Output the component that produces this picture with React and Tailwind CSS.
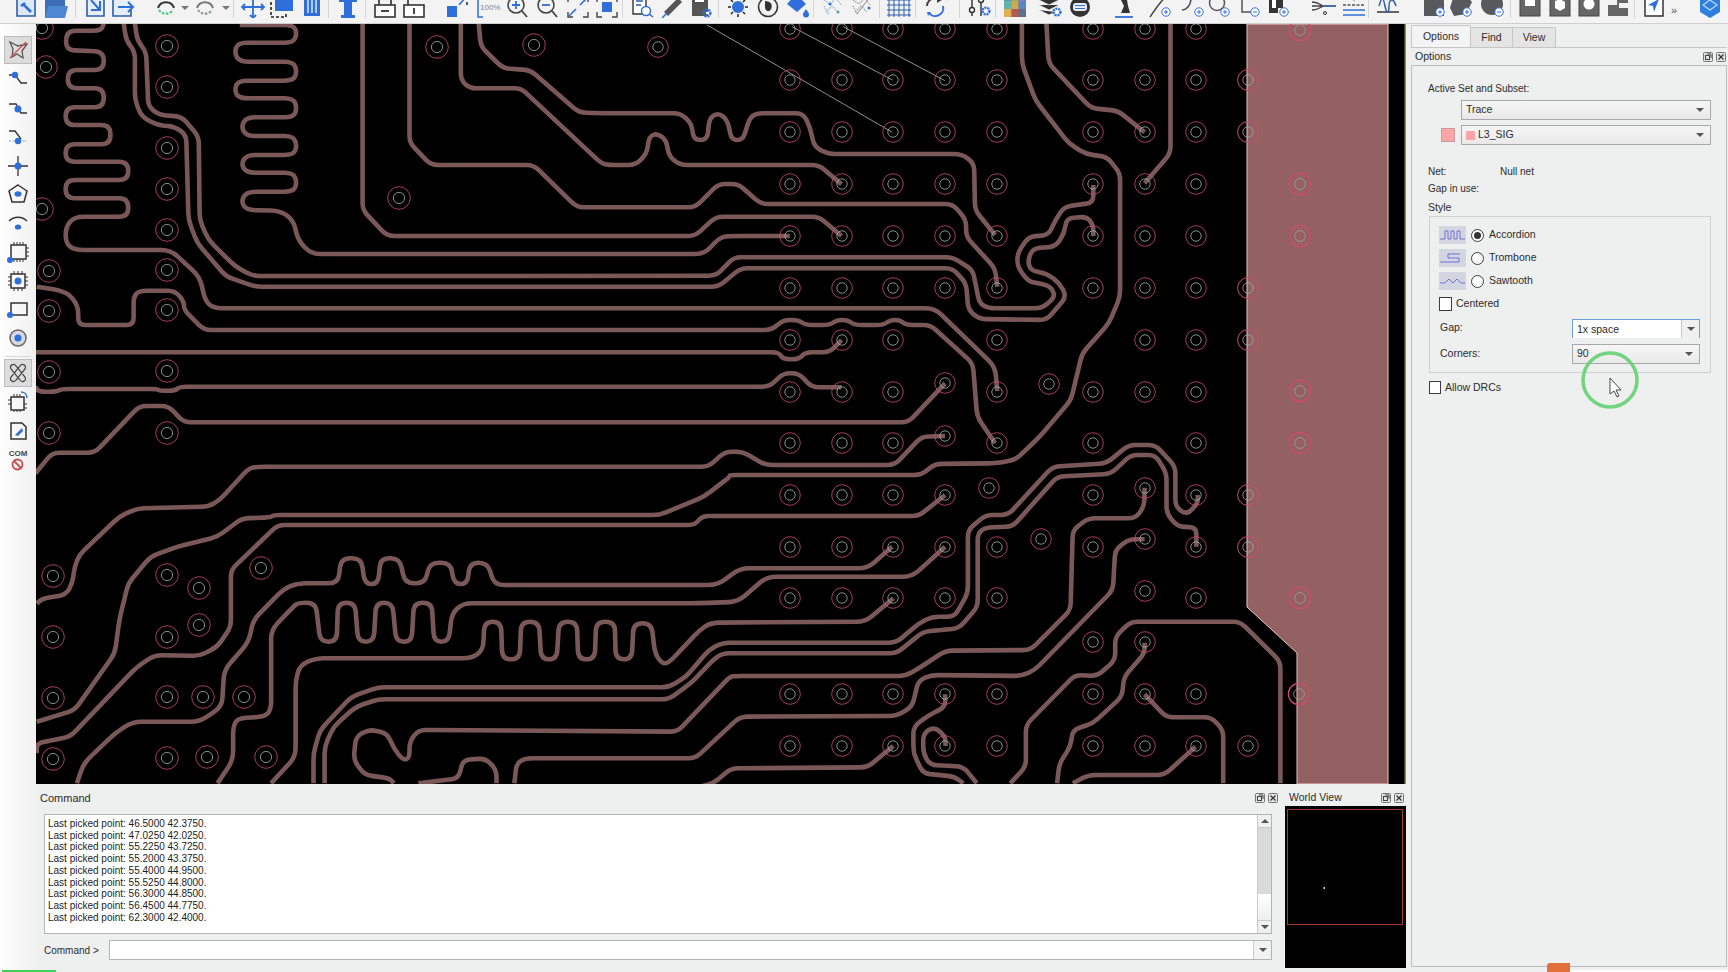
import React from "react";

const BLUE = "#2f6fdc";

// the board drawing is noted in four local grids, scaled back to page pixels
const zones = {
  8: [600, 20],
  9: [30, 20],
  10: [30, 420],
  11: [700, 420],
};

const tr = (...parts) => {
  const pts = [];
  for (let i = 0; i < parts.length; i += 2) {
    const [ox, oy] = zones[parts[i]];
    const list = parts[i + 1];
    for (let j = 0; j < list.length; j += 2) {
      pts.push([ox + list[j] / 2.24, oy + list[j + 1] / 3]);
    }
  }
  return pts;
};

const roundPath = (pts, r = 7) => {
  let d = `M${pts[0][0].toFixed(1)} ${pts[0][1].toFixed(1)}`;
  for (let i = 1; i < pts.length - 1; i++) {
    const [ax, ay] = pts[i - 1];
    const [bx, by] = pts[i];
    const [cx, cy] = pts[i + 1];
    const l1 = Math.hypot(bx - ax, by - ay) || 1;
    const l2 = Math.hypot(cx - bx, cy - by) || 1;
    const d1 = Math.min(r, l1 / 2);
    const d2 = Math.min(r, l2 / 2);
    d += `L${(bx - ((bx - ax) * d1) / l1).toFixed(1)} ${(by - ((by - ay) * d1) / l1).toFixed(1)}`;
    d += `Q${bx.toFixed(1)} ${by.toFixed(1)} ${(bx + ((cx - bx) * d2) / l2).toFixed(1)} ${(by + ((cy - by) * d2) / l2).toFixed(1)}`;
  }
  const last = pts[pts.length - 1];
  return d + `L${last[0].toFixed(1)} ${last[1].toFixed(1)}`;
};

// serpentines want bigger corners so the ends come out round
const serpentines = [
  tr(9, [165, 10, 160, 32, 82, 32, 80, 90, 165, 95, 165, 150, 85, 150, 85, 205, 165, 205, 165, 262, 80, 262, 80, 315, 180, 315, 180, 373, 80, 373, 80, 425, 220, 425, 220, 480, 80, 480, 80, 535, 220, 535, 220, 590, 100, 590, 80, 620, 80, 670, 100, 690, 315, 690, 380, 770, 392, 840, 410, 865, 1000, 865], 8, [750, 865, 885, 1040, 890, 1113]),
  tr(9, [470, 15, 590, 15, 598, 40, 590, 68, 465, 68, 458, 100, 470, 125, 590, 125, 598, 155, 590, 182, 465, 182, 458, 215, 470, 235, 590, 235, 598, 265, 590, 292, 485, 292, 473, 320, 485, 348, 590, 348, 598, 378, 590, 405, 485, 405, 473, 432, 485, 458, 590, 458, 598, 488, 590, 515, 485, 515, 473, 545, 485, 570, 560, 572, 590, 600, 600, 660, 630, 702, 1510, 702], 8, [270, 650, 300, 648, 425, 648]),
  tr(10, [105, 1090, 120, 1030, 190, 940, 230, 905, 380, 905, 430, 860, 435, 750, 490, 665, 500, 600, 570, 505, 600, 490, 690, 490, 697, 415, 742, 415, 750, 492, 780, 492, 785, 415, 828, 415, 840, 490, 885, 490, 895, 428, 942, 428, 950, 492, 980, 492, 985, 428, 1025, 428, 1040, 495, 1540, 495], 11, [90, 445, 375, 445, 430, 380]),
  tr(10, [420, 1090, 455, 1020, 455, 920, 465, 895, 525, 890, 540, 870, 540, 630, 590, 560, 600, 548, 640, 548, 650, 665, 687, 665, 690, 548, 728, 548, 735, 665, 770, 665, 775, 548, 812, 548, 820, 665, 855, 665, 860, 548, 900, 548, 905, 665, 938, 665, 945, 580, 970, 550, 1500, 550], 11, [85, 545, 150, 470, 475, 470, 549, 380]),
  tr(10, [540, 1090, 595, 1010, 595, 780, 605, 735, 640, 715, 990, 715, 1015, 690, 1018, 605, 1055, 605, 1058, 718, 1097, 718, 1100, 605, 1140, 605, 1145, 718, 1180, 718, 1185, 605, 1225, 605, 1228, 718, 1265, 718, 1268, 605, 1310, 605, 1312, 718, 1348, 718, 1352, 610, 1392, 610, 1400, 700, 1415, 730, 1430, 730, 1500, 630, 1525, 608], 11, [370, 605, 433, 535]),
];

const traces = [
  tr(9, [15, 800, 65, 810, 90, 825, 108, 860, 108, 915, 232, 915, 232, 830, 245, 812, 325, 812, 345, 845, 345, 870, 390, 930, 1000, 930], 8, [385, 930, 410, 900, 445, 900, 460, 915, 515, 915, 530, 900, 555, 900, 570, 915, 635, 915, 650, 900, 672, 900, 685, 915, 740, 915, 835, 1030, 845, 1190, 885, 1270]),
  tr(9, [12, 997, 1000, 997], 8, [400, 997, 410, 1018, 445, 1018, 460, 997, 515, 997, 541, 960]),
  tr(9, [12, 1100, 20, 1115, 60, 1115, 70, 1107, 285, 1107, 290, 1112, 325, 1112, 335, 1100, 1000, 1100], 8, [380, 1100, 410, 1060, 445, 1060, 475, 1102, 541, 1102]),
  tr(9, [12, 1360, 50, 1298, 145, 1298, 245, 1158, 310, 1158, 345, 1207, 1000, 1207], 8, [690, 1207, 773, 1090]),
  tr(10, [15, 550, 30, 535, 80, 525, 95, 490, 100, 440, 110, 405, 200, 290, 240, 265, 400, 260, 425, 240, 490, 145, 510, 140, 1520, 140], 8, [280, 1295, 320, 1295, 370, 1335, 660, 1335, 720, 1250, 773, 1248]),
  tr(9, [210, 10, 215, 60, 235, 95, 235, 240, 250, 290, 285, 315, 325, 320, 350, 345, 355, 600, 375, 670, 440, 770, 505, 800, 1000, 800], 8, [265, 800, 315, 745, 790, 745, 820, 790, 825, 870, 850, 897, 1000, 900, 1045, 830, 1030, 790, 1000, 760, 965, 752, 958, 720, 970, 685, 1020, 680, 1040, 640, 1045, 595, 1090, 590, 1105, 615, 1105, 648]),
  tr(9, [235, 10, 240, 60, 260, 95, 265, 260, 290, 285, 340, 290, 378, 350, 380, 600, 400, 660, 460, 740, 500, 768, 1000, 768], 8, [260, 767, 300, 712, 790, 712, 835, 750, 850, 850, 870, 865, 990, 865, 1020, 830, 1010, 800, 985, 790, 960, 785, 935, 740, 935, 700, 960, 650, 1005, 645, 1020, 600, 1040, 560, 1105, 548, 1105, 495]),
  tr(9, [745, 10, 745, 570, 800, 648, 1490, 648], 8, [260, 590, 490, 590, 541, 648]),
  tr(9, [850, 10, 850, 368, 898, 435, 1128, 435, 1225, 562, 1490, 562], 8, [265, 492, 310, 492, 360, 552, 790, 552, 820, 600, 820, 650, 885, 745, 890, 800]),
  tr(9, [965, 10, 965, 180, 985, 205, 1100, 205, 1280, 430], 8, [20, 435, 80, 435, 105, 400, 110, 350, 128, 340, 148, 360, 155, 410, 180, 435, 490, 435, 541, 493]),
  tr(9, [1005, 10, 1010, 80, 1060, 145, 1120, 150, 1230, 278, 1300, 280], 8, [180, 280, 205, 310, 210, 360, 240, 360, 245, 295, 265, 278, 285, 300, 295, 360, 320, 360, 335, 295, 350, 280, 455, 280, 470, 320, 480, 380, 510, 402, 810, 402, 838, 430, 840, 570, 885, 645]),
  tr(8, [945, 10, 945, 130, 975, 240, 1050, 370, 1090, 403, 1135, 410, 1165, 460, 1165, 830, 1140, 910, 1080, 1000, 1055, 1140, 985, 1250, 930, 1320, 885, 1330, 750, 1332, 720, 1365, 290, 1365], 10, [1568, 170, 1510, 230, 1410, 285, 545, 285, 540, 292, 475, 295, 420, 350, 330, 380, 270, 410, 220, 490, 200, 600, 190, 700, 100, 870, 15, 905]),
  tr(8, [1000, 10, 1005, 130, 1100, 265, 1160, 272, 1220, 337]),
  tr(8, [1278, 10, 1278, 400, 1220, 490]),
  tr(10, [15, 1000, 15, 970, 90, 950, 240, 740, 280, 705, 380, 708, 420, 680, 450, 620, 450, 450, 555, 315, 1490, 315, 1505, 288], 11, [490, 288, 549, 225]),
  tr(10, [635, 1090, 635, 1000, 650, 930, 720, 830, 780, 802, 1430, 802, 1470, 770, 1520, 690], 11, [50, 668, 440, 668, 490, 610, 520, 590, 570, 590, 600, 520, 600, 330, 640, 285, 690, 285, 790, 140, 910, 130, 960, 75, 1020, 75, 1065, 140, 1065, 260, 1090, 285, 1115, 250, 1115, 225]),
  tr(10, [660, 1090, 660, 980, 680, 920, 730, 860, 780, 838, 1430, 838, 1480, 790, 1530, 720], 11, [50, 700, 440, 700, 500, 635, 580, 625, 622, 560, 622, 340, 640, 322, 700, 320, 800, 170, 920, 162, 965, 105, 1020, 105, 1045, 160, 1045, 280, 1070, 320, 1112, 322, 1112, 380]),
  tr(10, [815, 1090, 805, 1075, 750, 1065, 725, 1020, 730, 950, 760, 928, 800, 940, 815, 985, 835, 1020, 850, 1015, 850, 965, 870, 930, 1450, 935, 1568, 770], 11, [80, 768, 460, 768, 490, 745, 550, 692, 740, 690, 830, 570, 835, 330, 870, 295, 975, 295, 995, 260, 996, 203]),
  tr(10, [1085, 1090, 1090, 1030, 1110, 1015, 1490, 1015], 11, [90, 890, 440, 888, 475, 860, 490, 780, 520, 765, 720, 768, 750, 750, 925, 510, 930, 390, 960, 358, 996, 358]),
  tr(10, [870, 1090, 960, 1075, 970, 1020, 1020, 1015, 1045, 1050, 1045, 1090]),
  tr(11, [0, 1100, 30, 1090, 70, 1045, 375, 1042, 433, 978]),
  tr(11, [695, 1090, 730, 1040, 730, 915, 840, 765, 890, 768, 930, 720, 930, 650, 965, 605, 1210, 605, 1300, 725, 1300, 1090]),
  tr(11, [800, 1090, 805, 1030, 830, 980, 835, 930, 880, 910, 945, 830, 950, 770, 996, 700, 996, 668]),
  tr(11, [835, 1090, 870, 1065, 1040, 1065, 1110, 980]),
  tr(11, [996, 823, 1045, 892, 1145, 892, 1172, 930, 1172, 1090]),
  tr(11, [620, 1090, 590, 1040, 515, 1035, 500, 1000, 500, 940, 525, 920, 550, 950, 550, 978]),
  tr(11, [590, 1090, 570, 1070, 500, 1060, 478, 1000, 478, 920, 510, 888, 550, 860, 549, 823]),
];

const airwires = [
  tr(8, [240, 15, 655, 337]),
  tr(8, [430, 20, 655, 180]),
  tr(8, [545, 20, 773, 182]),
];

const row = (y, xs) => xs.map((x) => [x, y]);
const gridPads = [
  ...row(29, [790, 842, 893, 945, 997, 1093, 1145, 1196]),
  ...row(80, [790, 842, 893, 945, 997, 1093, 1145, 1196]),
  ...row(132, [790, 842, 893, 945, 997, 1093, 1145, 1196]),
  ...row(184, [790, 842, 893, 945, 997, 1093, 1145, 1196]),
  ...row(236, [790, 842, 893, 945, 997, 1093, 1145, 1196]),
  ...row(288, [790, 842, 893, 945, 997, 1093, 1145, 1196]),
  ...row(340, [790, 842, 893, 997, 1145, 1196]),
  ...row(392, [790, 842, 893, 997, 1093, 1145, 1196]),
  ...row(443, [790, 842, 893, 997, 1093, 1196]),
  ...row(495, [790, 842, 893, 945, 1093, 1196]),
  ...row(547, [790, 842, 893, 945, 997, 1093, 1196]),
  ...row(598, [790, 842, 893, 945, 997, 1196]),
  ...row(642, [1093, 1145]),
  ...row(694, [790, 842, 893, 945, 997, 1093, 1145, 1196]),
  ...row(746, [790, 842, 893, 945, 997, 1093, 1145, 1196, 1248]),
  [945, 383], [1049, 384], [945, 436], [989, 488], [1145, 488], [1041, 539], [1145, 539], [1145, 591],
  [658, 47],
];

const loosePads = [
  [42, 28], [46, 67], [42, 209], [49, 271], [49, 311], [49, 372], [49, 433],
  [167, 46], [167, 87], [167, 148], [167, 189], [167, 230], [167, 270], [167, 310], [167, 371], [167, 433],
  [437, 47], [534, 45], [399, 198],
  [53, 576], [167, 575], [199, 588], [261, 568], [53, 637], [167, 637], [199, 625],
  [53, 698], [167, 697], [203, 697], [244, 697], [53, 759], [167, 758], [207, 757], [266, 757],
];

const edgePads = [
  [1248, 80], [1248, 132], [1248, 288], [1248, 340], [1248, 495], [1248, 547],
];

const planePads = [
  [1300, 30], [1300, 184], [1300, 236], [1300, 391], [1300, 443], [1300, 598], [1299, 694],
];

const Board = () => (
  <svg width="1370" height="760" viewBox="36 24 1370 760" className="block">
    <rect x="36" y="24" width="1370" height="760" fill="#000" />
    <path d="M1247 24V607L1297 653V784H1388V24Z" fill="#936161" stroke="#efc4c4" strokeWidth="1" />
    <rect x="1404.5" y="24" width="1.5" height="760" fill="#8d8d45" />
    {serpentines.map((t, i) => (
      <path key={i} d={roundPath(t, 9)} fill="none" stroke="#7b5858" strokeWidth="4.6" strokeLinejoin="round" />
    ))}
    {traces.map((t, i) => (
      <path key={i} d={roundPath(t)} fill="none" stroke="#7b5858" strokeWidth="4.6" strokeLinejoin="round" />
    ))}
    {airwires.map((t, i) => (
      <path key={i} d={roundPath(t)} fill="none" stroke="#d8cdb4" strokeWidth="0.7" />
    ))}
    {gridPads.map(([x, y], i) => (
      <g key={i} fill="none" strokeWidth="0.8">
        <circle cx={x} cy={y} r="10.3" stroke="#cc4c72" />
        <circle cx={x} cy={y} r="5.2" stroke="#9db3ac" />
      </g>
    ))}
    {loosePads.map(([x, y], i) => (
      <g key={i} fill="none" strokeWidth="0.8">
        <circle cx={x} cy={y} r="11.3" stroke="#cc4c72" />
        <circle cx={x} cy={y} r="5.6" stroke="#9db3ac" />
      </g>
    ))}
    {edgePads.map(([x, y], i) => (
      <g key={i} fill="none">
        <circle cx={x} cy={y} r="10.4" stroke="#cc4c72" strokeWidth="1" />
        <circle cx={x} cy={y} r="5.2" stroke="#a8a4a0" strokeWidth="0.8" />
      </g>
    ))}
    {planePads.map(([x, y], i) => (
      <g key={i} fill="none">
        <circle cx={x} cy={y} r="10.6" stroke="#d04a6e" strokeWidth="1.3" />
        <circle cx={x} cy={y} r="5.4" stroke="#a89a9a" strokeWidth="0.8" />
      </g>
    ))}
  </svg>
);

// only the lower part of these shows, the window top cuts the rest off
const TB = ({ ml, sep, children }) => (
  <div className={`relative h-[26px] w-[26px] shrink-0 ${ml}`}>
    {sep && <span className="absolute -left-[7px] bottom-0 h-[20px] w-px bg-[#d6d6d6]" />}
    <svg width="26" height="26" viewBox="0 0 26 26" fill="none">
      {children}
    </svg>
  </div>
);

const Caret = ({ ml }) => (
  <div className={`mb-[8px] h-0 w-0 shrink-0 border-x-[4px] border-t-[4px] border-x-transparent border-t-[#777] ${ml}`} />
);

const Plus = ({ x = 20, y = 21, minus = false }) => (
  <g>
    <circle cx={x} cy={y} r="4.2" fill="#fff" stroke={BLUE} strokeWidth="1" />
    <path d={minus ? `M${x - 2} ${y}h4` : `M${x - 2} ${y}h4M${x} ${y - 2}v4`} stroke={BLUE} strokeWidth="1" />
  </g>
);

const Gear = ({ x = 20, y = 20 }) => (
  <g>
    <circle cx={x} cy={y} r="3.4" stroke={BLUE} strokeWidth="2.4" strokeDasharray="2 0.8" />
    <circle cx={x} cy={y} r="1.2" fill="#fff" />
  </g>
);

const TopBar = () => (
  <div className="flex h-[24px] shrink-0 items-end overflow-hidden border-b border-[#cfcfcf] bg-[#f3f3f3] pb-[5px]">
    <TB ml="ml-[13px]"><path d="M4 2h18v22H4z" fill="#dce8f8" stroke="#2c5fa8" strokeWidth="1.6" /><path d="M10 12l8 8M8 14l4-3" stroke={BLUE} strokeWidth="2.6" /></TB>
    <TB ml="ml-[3px]"><path d="M3 2h10v5h10v19H3z" fill="#3a6db5" /><path d="M6 14h20l-3 12H3z" fill="#4f86d4" /><path d="M16 4h6v6" stroke={BLUE} strokeWidth="2" /></TB>
    <TB ml="ml-[14px]" sep><path d="M5 2h17v22H5z" fill="#e6eefa" stroke="#2c5fa8" strokeWidth="1.6" /><path d="M9 8l8 9M18 9v9H9" stroke={BLUE} strokeWidth="2" /></TB>
    <TB ml="ml-[1px]"><path d="M22 18v6H4V2h18" fill="#e6eefa" stroke="#2c5fa8" strokeWidth="1.6" /><path d="M9 15h15M19 10l5 5-5 5" stroke={BLUE} strokeWidth="2" /></TB>
    <TB ml="ml-[18px]"><path d="M5 16a8.5 8.5 0 0 1 16 0" stroke="#333" strokeWidth="2" /><path d="M6 18a8.5 8.5 0 0 0 14 0" stroke="#4fbf8b" strokeWidth="2.2" strokeDasharray="2.5 1.5" /></TB>
    <Caret ml="ml-[2px]" />
    <TB ml="ml-[3px]"><path d="M5 16a8.5 8.5 0 0 1 16 0" stroke="#777" strokeWidth="2" /><path d="M6 18a8.5 8.5 0 0 0 14 0" stroke="#8a9a94" strokeWidth="2.2" strokeDasharray="2.5 1.5" /></TB>
    <Caret ml="ml-[4px]" />
    <TB ml="ml-[10px]" sep><path d="M13 3v22M2 15h22" stroke={BLUE} strokeWidth="1.8" /><path d="M10 23l3 3 3-3M5 12l-3 3 3 3M21 12l3 3-3 3" stroke={BLUE} strokeWidth="1.8" /></TB>
    <TB ml="ml-[3px]"><rect x="6" y="0" width="18" height="19" fill={BLUE} /><path d="M2 10v15h15v-4" stroke="#222" strokeWidth="1.6" strokeDasharray="3 2" /></TB>
    <TB ml="ml-[4px]"><rect x="5" y="2" width="16" height="22" fill={BLUE} /><path d="M9 6v15M13 6v15M17 6v15" stroke="#cfe0fa" strokeWidth="1.6" /></TB>
    <TB ml="ml-[10px]" sep><path d="M4 2h18v8h-5v13h3v3H6v-3h3V10H4z" fill={BLUE} /></TB>
    <TB ml="ml-[11px]" sep><path d="M7 14V8a6 6 0 0 1 12 0v6" stroke="#444" strokeWidth="1.8" /><rect x="3" y="13" width="20" height="12" fill="#fff" stroke="#333" strokeWidth="1.6" /><path d="M9 19h8" stroke="#444" strokeWidth="2" /></TB>
    <TB ml="ml-[3px]"><path d="M7 14V8a6 6 0 0 1 12 0" stroke="#444" strokeWidth="1.8" /><rect x="3" y="13" width="20" height="12" fill="#fff" stroke="#333" strokeWidth="1.6" /><path d="M13 16v6" stroke="#444" strokeWidth="2" /></TB>
    <TB ml="ml-[17px]"><rect x="3" y="14" width="10" height="11" fill={BLUE} /><path d="M14 4h9v9M15 25" stroke="#333" strokeWidth="1.6" strokeDasharray="3 2" /><path d="M15 13l7-8" stroke={BLUE} strokeWidth="1.6" /></TB>
    <TB ml="ml-[5px]"><path d="M8 6H3v19h5M18 6h5" stroke={BLUE} strokeWidth="1.5" /><text x="5" y="18" fontSize="8" fill="#888" fontFamily="Liberation Sans">100%</text></TB>
    <TB ml="ml-[3px]"><circle cx="12" cy="13" r="8" stroke="#444" strokeWidth="1.6" /><path d="M18 19l5 6" stroke="#444" strokeWidth="1.8" /><path d="M8 13h8M12 9v8" stroke={BLUE} strokeWidth="1.8" /></TB>
    <TB ml="ml-[4px]"><circle cx="12" cy="13" r="8" stroke="#444" strokeWidth="1.6" /><path d="M18 19l5 6" stroke="#444" strokeWidth="1.8" /><path d="M8 13h8" stroke={BLUE} strokeWidth="1.8" /></TB>
    <TB ml="ml-[5px]"><path d="M3 20v5h5M23 20v5h-5M3 10V5h5M23 10V5h-5" stroke="#444" strokeWidth="1.4" /><path d="M4 24l7-7M22 6l-7 7" stroke={BLUE} strokeWidth="1.6" /></TB>
    <TB ml="ml-[3px]"><path d="M3 20v5h5M23 20v5h-5M3 10V5h5M23 10V5h-5" stroke="#444" strokeWidth="1.4" /><rect x="8" y="10" width="10" height="10" fill={BLUE} /></TB>
    <TB ml="ml-[9px]" sep><path d="M4 2h13v20H4z" fill="#fff" stroke="#333" strokeWidth="1.4" /><circle cx="17" cy="19" r="4.5" fill="#fff" stroke={BLUE} strokeWidth="1.5" /><path d="M20 22l4 3M7 9h7M7 13h5" stroke="#2c5fa8" strokeWidth="1.3" /></TB>
    <TB ml="ml-[5px]"><path d="M4 20L18 6l4 4L8 24z" fill="#555" /><path d="M2 26l5-5M20 4l5-3" stroke={BLUE} strokeWidth="1.5" /></TB>
    <TB ml="ml-[2px]"><path d="M4 2h16v22H4z" fill="#555" /><rect x="7" y="8" width="9" height="2" fill="#fff" /><Gear x={19} y={21} /></TB>
    <TB ml="ml-[11px]" sep><circle cx="13" cy="15" r="6" fill={BLUE} /><path d="M13 5v3M13 22v3M3 15h3M20 15h3M6 8l2 2M20 8l-2 2M6 22l2-2M20 22l-2-2" stroke="#222" strokeWidth="1.5" /></TB>
    <TB ml="ml-[4px]"><circle cx="13" cy="15" r="9.5" stroke="#333" strokeWidth="1.6" /><path d="M10 9c6 0 8 4 6 8s-6 2-6-2z" fill="#333" /></TB>
    <TB ml="ml-[3px]"><path d="M12 2l10 10-9 8L3 12z" fill={BLUE} /><path d="M22 17c-2 3-3 4-3 5.5a3 3 0 0 0 6 0c0-1.5-1-2.5-3-5.5z" fill={BLUE} /></TB>
    <TB ml="ml-[10px]" sep><path d="M4 8l6 4 6-6 5 7M6 20l6-6 6 6M4 14l5 9" stroke="#8fb0cc" strokeWidth="1.2" strokeDasharray="1.5 1" /><circle cx="10" cy="12" r="1.5" fill={BLUE} /><circle cx="18" cy="20" r="1.5" fill="#4fa38a" /></TB>
    <TB ml="ml-[3px]"><path d="M4 8l6 4 6-6 5 7M6 20l6-6 6 6M4 14l5 9" stroke="#9a9a9a" strokeWidth="1.2" strokeDasharray="1.5 1" /><path d="M8 22L20 6" stroke="#888" strokeWidth="1" /><circle cx="20" cy="16" r="1.5" fill={BLUE} /></TB>
    <TB ml="ml-[11px]" sep><path d="M3 4v21M8 4v21M13 4v21M18 4v21M23 4v21M1 8h24M1 13h24M1 18h24M1 23h24" stroke="#2c5fa8" strokeWidth="1" /></TB>
    <TB ml="ml-[10px]" sep><path d="M5 14a8 8 0 0 1 13-6" stroke="#444" strokeWidth="2" /><path d="M21 14a8 8 0 0 1-14 7" stroke={BLUE} strokeWidth="2" /><path d="M15 5l5 3-5 3" fill="#444" /><path d="M5 20l1 4 3-4" fill={BLUE} /></TB>
    <TB ml="ml-[18px]" sep><path d="M6 2v22M15 2v22" stroke="#444" strokeWidth="1.6" /><circle cx="6" cy="18" r="2.5" fill="#fff" stroke="#333" strokeWidth="1.4" /><circle cx="15" cy="8" r="2.5" fill="#fff" stroke="#333" strokeWidth="1.4" /><Gear x={20} y={19} /></TB>
    <TB ml="ml-[10px]" sep><rect x="2" y="2" width="22" height="23" fill="#b05c50" /><rect x="2" y="2" width="7.3" height="7" fill="#6a8fb0" /><rect x="9.3" y="2" width="7.3" height="7" fill="#8cb56a" /><rect x="16.6" y="2" width="7.4" height="7" fill="#8e79b5" /><rect x="2" y="9" width="7.3" height="8" fill="#5fb5a8" /><rect x="9.3" y="9" width="7.3" height="8" fill="#d0a84e" /><rect x="16.6" y="9" width="7.4" height="8" fill="#5a84c8" /><rect x="2" y="17" width="7.3" height="8" fill="#e0b04e" /><rect x="16.6" y="17" width="7.4" height="8" fill="#5f6f88" /></TB>
    <TB ml="ml-[9px]"><path d="M2 8l10 5 10-5-10-5zM2 13l10 5 10-5M2 18l10 5 6-3" fill="#333" stroke="#f3f3f3" strokeWidth="0.8" /><Gear x={20} y={20} /></TB>
    <TB ml="ml-[4px]"><circle cx="13" cy="15" r="10" fill="#333" /><rect x="6" y="11" width="14" height="8" rx="3" fill="#e8eef8" /><path d="M8 13.5h10M8 16.5h10" stroke={BLUE} strokeWidth="1" /></TB>
    <TB ml="ml-[18px]"><path d="M13 0l-3 8 3 6-3 7h9l-2-7-1-6z" fill="#333" /><path d="M4 25h18" stroke={BLUE} strokeWidth="1.8" /></TB>
    <TB ml="ml-[10px]"><path d="M3 25C8 18 14 8 20 4" stroke="#444" strokeWidth="1.5" /><Plus x={19} y={20} /></TB>
    <TB ml="ml-[7px]"><path d="M2 18c4 0 9-4 9-12" stroke="#444" strokeWidth="1.5" /><Plus x={19} y={20} /></TB>
    <TB ml="ml-[1px]"><circle cx="10" cy="11" r="7.5" stroke="#555" strokeWidth="1.5" /><Plus x={18} y={20} /></TB>
    <TB ml="ml-[4px]"><path d="M5 0v20h9" stroke="#555" strokeWidth="1.5" /><Plus x={18} y={20} minus /></TB>
    <TB ml="ml-[3px]"><path d="M3 2h9v5h5v9h-5v5H3z" fill="#333" /><path d="M6 8h4v8H6z" fill="#fff" /><Plus x={18} y={20} /></TB>
    <TB ml="ml-[18px]"><path d="M2 14h24M2 10c8 0 9 4 12 4M2 18c8 0 9-4 12-4" stroke="#444" strokeWidth="1.3" /><path d="M14 14h10" stroke={BLUE} strokeWidth="1.5" /><circle cx="15" cy="21" r="1.5" stroke="#333" /></TB>
    <TB ml="ml-[5px]"><path d="M7 2h12l-6 7z" fill={BLUE} /><path d="M2 13h22" stroke="#555" strokeWidth="1.5" strokeDasharray="3 1.5" /><path d="M2 18h22M2 23h22" stroke={BLUE} strokeWidth="1.5" /></TB>
    <TB ml="ml-[8px]" sep><path d="M2 20h22" stroke="#333" strokeWidth="1.5" /><path d="M4 14c3-10 4-10 6 0s4 6 4 0 4-10 7 0" stroke="#2c5fa8" strokeWidth="1.5" /></TB>
    <TB ml="ml-[20px]"><rect x="3" y="0" width="20" height="24" fill="#58595c" /><Plus x={19} y={20} /></TB>
    <TB ml="ml-[1px]"><path d="M5 6L17 2l7 8-6 12-12 2-4-8z" fill="#58595c" /><Plus x={19} y={20} /></TB>
    <TB ml="ml-[6px]"><circle cx="12" cy="12" r="11" fill="#58595c" /><Plus x={19} y={20} minus /></TB>
    <TB ml="ml-[11px]" sep><rect x="3" y="0" width="20" height="24" fill="#666" stroke="#444" /><rect x="8" y="8" width="10" height="6" fill="#fff" /></TB>
    <TB ml="ml-[4px]"><rect x="3" y="0" width="20" height="24" fill="#666" stroke="#444" /><path d="M8 9l5-2 5 3v6l-5 3-5-3z" fill="#fff" /></TB>
    <TB ml="ml-[3px]"><rect x="3" y="0" width="20" height="24" fill="#666" stroke="#444" /><circle cx="13" cy="12" r="5.5" fill="#fff" /></TB>
    <TB ml="ml-[3px]"><path d="M3 0h20v11h-9v5h9v8H3V13h9V8H3z" fill="#666" /></TB>
    <TB ml="ml-[10px]" sep><path d="M4 4h18v20H4z" fill="#fff" stroke="#333" strokeWidth="1.5" /><path d="M18 7l-11 6 5 1 1 6z" fill={BLUE} /></TB>
    <span className="mb-[1px] ml-[4px] w-[8px] shrink-0 font-['Liberation_Sans',sans-serif] text-[11px] leading-[14px] text-[#555]">»</span>
    <TB ml="ml-[18px]"><path d="M13 0l10 6v14l-10 6L3 20V6z" fill="#2f7fdc" /><path d="M6 13l7-5 7 5-7 5z" fill="none" stroke="#bcd8f7" strokeWidth="1.2" /></TB>
  </div>
);

const LB = ({ active, mt = "", children }) => (
  <div className={`flex h-[28px] w-[28px] items-center justify-center ${mt} ${active ? "border border-[#bcbcbc] bg-[#dcdcdc]" : ""}`}>
    <svg width="24" height="24" viewBox="0 0 24 24" fill="none">
      {children}
    </svg>
  </div>
);

const LeftBar = () => (
  <div className="flex w-[36px] shrink-0 flex-col items-center bg-gradient-to-r from-white to-[#f0f0f0] pt-[12px]">
    <LB active>
      <path d="M4 4l8 4 9-2-5 7 1 7-6-4-5 3 1-8z" stroke="#555" strokeWidth="1.3" />
      <path d="M4 20L20 4" stroke="#d05050" strokeWidth="1.3" />
    </LB>
    <LB mt="mt-[2px]"><path d="M3 7h6l6 8h6" stroke="#333" strokeWidth="1.3" /><circle cx="9" cy="7" r="3.2" fill={BLUE} /></LB>
    <LB mt="mt-[2px]"><path d="M3 6h7l5 9h6" stroke="#333" strokeWidth="1.3" /><circle cx="12" cy="11" r="3.5" fill={BLUE} /></LB>
    <LB mt="mt-[1px]"><path d="M3 4h6l6 8" stroke="#333" strokeWidth="1.3" /><path d="M3 14h18" stroke="#8a98b0" strokeWidth="1" strokeDasharray="2 1.5" /><circle cx="12" cy="14" r="3.2" fill={BLUE} /></LB>
    <LB mt="-mt-[1px]"><path d="M12 2v20M2 12h20" stroke="#333" strokeWidth="1.3" /><circle cx="12" cy="12" r="3.5" fill={BLUE} /></LB>
    <LB><path d="M12 3l9 6-3 11H6L3 9z" stroke="#333" strokeWidth="1.5" /><ellipse cx="12" cy="12" rx="3.5" ry="2.8" fill={BLUE} /></LB>
    <LB mt="mt-[1px]"><path d="M3 10c5-5 13-5 18 0" stroke="#333" strokeWidth="1.5" /><ellipse cx="12" cy="16" rx="3.2" ry="2.6" fill={BLUE} /></LB>
    <LB mt="mt-[1px]"><rect x="5" y="5" width="15" height="14" stroke="#333" strokeWidth="1.5" /><path d="M8 2v3M11 2v3M14 2v3M17 2v3M8 19v3M11 19v3M14 19v3M17 19v3M20 8h3M20 12h3M20 16h3" stroke="#333" strokeWidth="1" /><circle cx="4" cy="20" r="3" fill={BLUE} /></LB>
    <LB mt="mt-[1px]"><rect x="5" y="5" width="14" height="14" stroke="#333" strokeWidth="1.5" /><path d="M8 2v3M12 2v3M16 2v3M8 19v3M12 19v3M16 19v3M2 8h3M2 12h3M2 16h3M19 8h3M19 12h3M19 16h3" stroke="#333" strokeWidth="1" /><circle cx="12" cy="12" r="3.5" fill={BLUE} /></LB>
    <LB mt="mt-[1px]"><rect x="5" y="5" width="16" height="12" stroke="#333" strokeWidth="1.5" /><circle cx="4" cy="17" r="3" fill={BLUE} /></LB>
    <LB><circle cx="12" cy="12" r="8" fill="#d8d8e0" stroke="#666" strokeWidth="1.5" /><circle cx="12" cy="12" r="3.5" fill={BLUE} /></LB>
    <div className="mt-[4px] h-px w-[26px] bg-[#d6d6d6]" />
    <LB active mt="mt-[2px]">
      <path d="M5 8c-2-4 3-6 5-3l9 11c2 4-3 6-5 3zM19 8c2-4-3-6-5-3L5 16c-2 4 3 6 5 3z" stroke="#444" strokeWidth="1.2" />
    </LB>
    <LB mt="mt-[1px]"><rect x="5" y="7" width="13" height="13" stroke="#333" strokeWidth="1.5" /><path d="M8 4v3M11 4v3M14 4v3M8 20v2M11 20v2M14 20v2M2 10h3M2 14h3M18 14h3M18 18h3" stroke="#333" strokeWidth="1" /><path d="M15 2c3 0 6 2 6 6" stroke={BLUE} strokeWidth="1.5" /></LB>
    <LB mt="mt-[1px]"><path d="M5 4h11l4 4v12H5z" stroke="#333" strokeWidth="1.5" /><path d="M9 16l7-7 1 3-5 5z" fill={BLUE} /></LB>
    <div className="mt-[4px] flex flex-col items-center font-['Liberation_Sans',sans-serif]">
      <span className="text-[8px] font-bold leading-[9px] text-[#444]">COM</span>
      <svg width="13" height="13" viewBox="0 0 13 13" fill="none">
        <circle cx="6.5" cy="6.5" r="5" stroke="#cc4a4a" strokeWidth="1.8" />
        <path d="M3 3l7 7" stroke="#cc4a4a" strokeWidth="1.8" />
      </svg>
    </div>
  </div>
);

const DockIcons = () => (
  <div className="flex gap-[3px]">
    <svg width="10" height="10" viewBox="0 0 10 10" fill="none">
      <rect x="0.5" y="0.5" width="9" height="9" rx="1" fill="#e4e4e4" stroke="#777" />
      <rect x="2.5" y="3.5" width="4" height="4" stroke="#444" />
      <path d="M4 2h4v4" stroke="#444" />
    </svg>
    <svg width="10" height="10" viewBox="0 0 10 10" fill="none">
      <rect x="0.5" y="0.5" width="9" height="9" rx="1" fill="#e4e4e4" stroke="#777" />
      <path d="M2.5 2.5l5 5M7.5 2.5l-5 5" stroke="#333" strokeWidth="1.2" />
    </svg>
  </div>
);

const Arrow = ({ up }) => (
  <div
    className={`h-0 w-0 border-x-[4px] border-x-transparent ${up ? "border-b-[4px] border-b-[#555]" : "border-t-[4px] border-t-[#555]"}`}
  />
);

const logLines = [
  "Last picked point: 46.5000 42.3750.",
  "Last picked point: 47.0250 42.0250.",
  "Last picked point: 55.2250 43.7250.",
  "Last picked point: 55.2000 43.3750.",
  "Last picked point: 55.4000 44.9500.",
  "Last picked point: 55.5250 44.8000.",
  "Last picked point: 56.3000 44.8500.",
  "Last picked point: 56.4500 44.7750.",
  "Last picked point: 62.3000 42.4000.",
];

const CommandPanel = () => (
  <div className="flex w-[1244px] shrink-0 flex-col">
    <div className="flex h-[30px] items-center justify-between pb-[2px] pl-[4px] pr-[2px]">
      <span className="text-[11px]">Command</span>
      <DockIcons />
    </div>
    <div className="ml-[8px] flex h-[120px] w-[1228px] border border-[#b4b4b4] bg-white">
      <div className="flex-1 overflow-hidden pl-[3px] pt-[3px] text-[10px] leading-[11.7px] text-[#1d1d1d]">
        {logLines.map((line) => (
          <div key={line}>{line}</div>
        ))}
      </div>
      <div className="flex w-[14px] flex-col border-l border-[#c9c9c9]">
        <div className="flex h-[13px] items-center justify-center border-b border-[#c9c9c9] bg-[#f0f0f0]">
          <Arrow up />
        </div>
        <div className="h-[66px] bg-[#dadada]" />
        <div className="flex-1 bg-gradient-to-b from-white to-[#efefef]" />
        <div className="flex h-[13px] items-center justify-center border-t border-[#c9c9c9] bg-[#f0f0f0]">
          <Arrow />
        </div>
      </div>
    </div>
    <div className="mt-[6px] flex items-center pl-[8px]">
      <span className="w-[65px] text-[10px]">Command &gt;</span>
      <div className="flex h-[20px] w-[1163px] border border-[#b4b4b4] bg-white">
        <div className="flex-1" />
        <div className="flex w-[18px] items-center justify-center border-l border-[#c9c9c9] bg-[#f2f2f2]">
          <Arrow />
        </div>
      </div>
    </div>
  </div>
);

const WorldView = () => (
  <div className="flex w-[126px] shrink-0 flex-col">
    <div className="flex h-[22px] items-center justify-between pl-[9px] pr-[2px] pt-[6px]">
      <span>World View</span>
      <DockIcons />
    </div>
    <svg width="121" height="162" viewBox="0 0 121 162" className="ml-[5px] block bg-black">
      <rect x="2.5" y="3.5" width="115" height="115" fill="none" stroke="#a53a34" strokeWidth="1" />
      <rect x="38.5" y="81" width="1.5" height="2" fill="#f4d8d8" />
    </svg>
  </div>
);

const Combo = ({ className = "", children }) => (
  <div
    className={`flex h-[20px] items-center justify-between border border-[#a9a9a9] bg-gradient-to-b from-[#f6f6f6] to-[#e9e9e9] pl-[4px] ${className}`}
  >
    <div className="flex items-center gap-[3px]">{children}</div>
    <div className="mr-[6px] h-0 w-0 border-x-[4px] border-t-[4px] border-x-transparent border-t-[#555]" />
  </div>
);

const Radio = ({ checked }) => (
  <div className="ml-[5px] flex h-[13px] w-[13px] items-center justify-center rounded-full border border-[#3c3c3c] bg-white">
    {checked && <div className="h-[7px] w-[7px] rounded-full bg-[#333]" />}
  </div>
);

const StyleThumb = ({ children }) => (
  <svg width="27" height="18" viewBox="0 0 27 18" fill="none" className="block bg-[#d3d6e0]">
    <g stroke="#6a74d6" strokeWidth="1">{children}</g>
  </svg>
);

const OptionsPanel = () => (
  <div className="relative ml-[5px] mr-px flex h-[943px] flex-1 flex-col">
    <div className="flex h-[23px] items-end">
      <div className="flex h-[22px] w-[60px] items-center justify-center rounded-t-[2px] border border-b-0 border-[#c6c6c6] bg-[#f4f4f4]">Options</div>
      <div className="flex h-[20px] w-[42px] items-center justify-center border-r border-t border-[#c6c6c6] bg-[#e4e4e4]">Find</div>
      <div className="flex h-[20px] w-[43px] items-center justify-center rounded-tr-[2px] border-r border-t border-[#c6c6c6] bg-[#e4e4e4]">View</div>
    </div>
    <div className="flex h-[18px] items-center justify-between border-t border-[#c6c6c6] pl-[4px] pr-[1px]">
      <span>Options</span>
      <DockIcons />
    </div>
    <div className="flex-1 border border-[#bdbdbd] pl-[16px] pt-[16px]">
      <div className="h-[13px] text-[10px] leading-[13px]">Active Set and Subset:</div>
      <Combo className="ml-[33px] mt-[5px] w-[250px]">Trace</Combo>
      <div className="mt-[5px] flex items-center">
        <div className="ml-[13px] h-[14px] w-[14px] border border-[#c49a9a] bg-[#ffa5a5]" />
        <Combo className="ml-[6px] w-[250px]">
          <span className="h-[9px] w-[9px] bg-[#ffa5a5]" />
          L3_SIG
        </Combo>
      </div>
      <div className="mt-[20px] flex h-[13px] text-[10px] leading-[13px]">
        <span className="w-[72px]">Net:</span>
        <span>Null net</span>
      </div>
      <div className="mt-[4px] h-[13px] text-[10px] leading-[13px]">Gap in use:</div>
      <div className="mt-[6px] h-[13px] leading-[13px]">Style</div>
      <div className="ml-px mt-[2px] h-[157px] w-[282px] border border-[#d0d0d0] pl-[9px] pt-[9px]">
        <div className="flex items-center">
          <StyleThumb><path d="M1 13h5V5h3v8h3V5h3v8h3V5h3v8h5" /></StyleThumb>
          <Radio checked />
          <span className="ml-[5px]">Accordion</span>
        </div>
        <div className="mt-[5px] flex items-center">
          <StyleThumb><path d="M1 13h6M7 13h13V9H9V5h12" /></StyleThumb>
          <Radio />
          <span className="ml-[5px]">Trombone</span>
        </div>
        <div className="mt-[5px] flex items-center">
          <StyleThumb><path d="M1 11h5l4-4 4 4 4-4 4 4h4" /></StyleThumb>
          <Radio />
          <span className="ml-[5px]">Sawtooth</span>
        </div>
        <div className="mt-[6px] flex items-center">
          <div className="h-[14px] w-[13px] border border-[#3c3c3c] bg-white" />
          <span className="ml-[4px]">Centered</span>
        </div>
        <div className="mt-[7px] flex items-center">
          <span className="w-[133px] pl-px">Gap:</span>
          <div className="flex h-[19px] w-[128px] border-x border-t border-[#6aa2d8] bg-white">
            <span className="flex-1 pl-[4px] leading-[18px]">1x space</span>
            <div className="flex w-[18px] items-center justify-center border-l border-[#c9c9c9] bg-[#f0f0f0]">
              <Arrow />
            </div>
          </div>
        </div>
        <div className="mt-[6px] flex items-center">
          <span className="w-[133px] pl-px">Corners:</span>
          <Combo className="w-[128px]">90</Combo>
        </div>
      </div>
      <div className="ml-px mt-[7px] flex items-center">
        <div className="h-[13px] w-[12px] border border-[#3c3c3c] bg-white" />
        <span className="ml-[4px]">Allow DRCs</span>
      </div>
    </div>
    {/* recording highlight around the pointer */}
    <svg width="64" height="64" viewBox="0 0 64 64" fill="none" className="absolute left-[167px] top-[324px]">
      <circle cx="32" cy="32" r="27" stroke="#71d47f" strokeWidth="3.5" />
      <path d="M32 30v16l4-3 3 6 2-1-3-6h5z" fill="#fff" stroke="#333" strokeWidth="0.9" />
    </svg>
  </div>
);

export default function App() {
  return (
    <div className="relative flex h-[972px] w-[1728px] flex-col overflow-hidden bg-[#eeefef] font-['Liberation_Sans',sans-serif] text-[10.5px] text-[#2c2c2c]">
      <TopBar />
      <div className="flex flex-1">
        <LeftBar />
        <div className="flex w-[1370px] shrink-0 flex-col">
          <Board />
          <div className="flex flex-1">
            <CommandPanel />
            <WorldView />
          </div>
        </div>
        <OptionsPanel />
      </div>
      {/* bits of the desktop under the window */}
      <div className="absolute bottom-0 left-[2px] h-[2px] w-[54px] bg-[#3fcf5c]" />
      <div className="absolute bottom-0 left-[1547px] h-[9px] w-[23px] rounded-tl-[3px] bg-[#e2703a]" />
      <div className="absolute bottom-0 left-[1570px] h-[2px] w-[158px] bg-white" />
    </div>
  );
}
